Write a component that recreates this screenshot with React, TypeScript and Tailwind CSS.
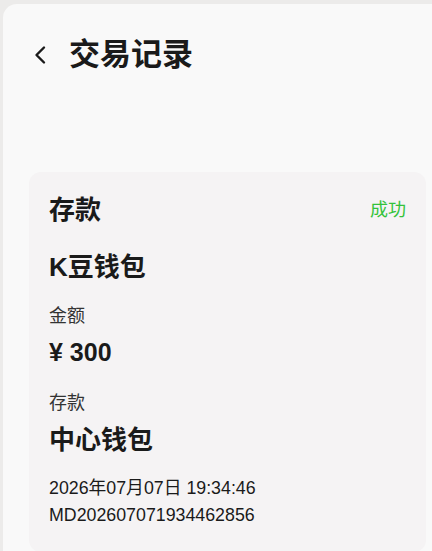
export default function App() {
    return (
        <div
            className="min-h-[551px] w-[432px] overflow-hidden bg-[#ecebea] pt-1 pl-[3px]"
            style={{ fontFamily: '"Liberation Sans", "Noto Sans CJK SC", sans-serif' }}
        >
            <div className="min-h-[547px] w-[440px] rounded-tl-[14px] bg-[#f9f9f9] pb-[2px] pl-[26px]">
                {/* Header */}
                <div className="flex h-[114px] items-start pt-[33px]">
                    <button className="ml-[4px] flex h-[36px] w-[20px] items-center text-[#1a1a1a]">
                        <svg width="14" height="20" viewBox="0 0 14 20" fill="none">
                            <path d="M11 2.5L3.5 10L11 17.5" stroke="currentColor" strokeWidth="2.4" strokeLinecap="round" strokeLinejoin="round" />
                        </svg>
                    </button>
                    <h1 className="ml-[16px] text-[31px] font-bold leading-[36px] text-[#1a1a1a]">交易记录</h1>
                </div>

                {/* Card */}
                <div className="mt-[54px] w-[397px] rounded-[12px] bg-[#f5f3f4] px-[20px] pt-[20px] pb-[23px] text-[#1a1a1a]">
                    <div className="flex items-center justify-between">
                        <span className="text-[26px] font-bold leading-[36px]">存款</span>
                        <span className="text-[18px] leading-[36px] text-[#33c23a]">成功</span>
                    </div>
                    <p className="mt-[21px] text-[26px] font-bold leading-[36px]">K豆钱包</p>

                    <p className="mt-[19px] text-[18px] leading-[24px] text-[#333]">金额</p>
                    <p className="mt-[9px] text-[25px] font-bold leading-[30px]">¥ 300</p>

                    <p className="mt-[24px] text-[18px] leading-[24px] text-[#333]">存款</p>
                    <p className="mt-[7px] text-[26px] font-bold leading-[36px]">中心钱包</p>

                    <p className="mt-[17px] text-[17.8px] leading-[27px]">2026年07月07日 19:34:46</p>
                    <p className="text-[17.8px] leading-[27px]">MD202607071934462856</p>
                </div>
            </div>
        </div>
    );
}
